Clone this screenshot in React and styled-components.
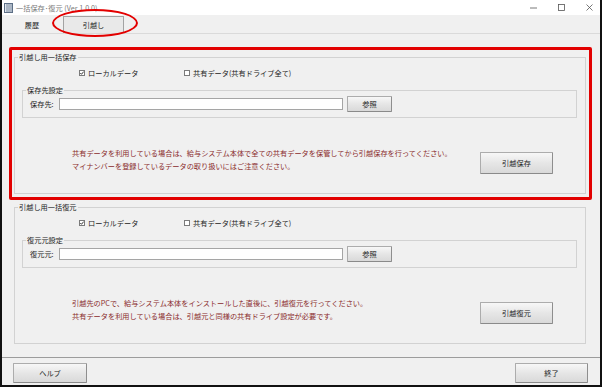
import React from 'react';
import styled, { createGlobalStyle } from 'styled-components';

const GlobalStyle = createGlobalStyle`
  html, body {
    margin: 0;
    padding: 0;
    background: #ffffff;
  }
  body {
    font-family: "Noto Sans CJK JP", "Noto Sans", sans-serif;
  }
`;

const Window = styled.div`
  position: relative;
  width: 602px;
  height: 387px;
  box-sizing: border-box;
  border: 2px solid #111;
  border-top: none;
  background: #f0f0f0;
  font-size: 7.2px;
  color: #222;
  overflow: hidden;
`;

const Header = styled.div`
  position: relative;
`;

const TitleBar = styled.div`
  height: 15px;
  background: #fff;
  display: flex;
  align-items: center;
  padding-left: 2px;
`;

const Title = styled.span`
  margin-left: 3px;
  color: #7a7a7a;
  font-size: 7.2px;
  line-height: 10px;
  flex: 1;
`;

const Controls = styled.div`
  display: flex;
  align-items: center;
  gap: 6px;
`;

const ControlBox = styled.div`
  width: 22px;
  height: 15px;
  display: flex;
  align-items: center;
  justify-content: center;
`;

const TabBar = styled.div`
  height: 18px;
  display: flex;
  align-items: flex-end;
  padding-left: 10px;
  border-bottom: 1px solid #dadada;
`;

const Tab = styled.div`
  box-sizing: border-box;
  display: flex;
  align-items: center;
  justify-content: center;
  line-height: 10px;
  width: ${(p) => (p.$active ? '61px' : '40px')};
  height: ${(p) => (p.$active ? '17px' : '18px')};
  margin-left: ${(p) => (p.$active ? '11px' : '0')};
  padding-top: ${(p) => (p.$active ? '0' : '2px')};
  background: ${(p) => (p.$active ? '#e9e9e9' : 'transparent')};
  border: ${(p) => (p.$active ? '1px solid #a3a3a3' : 'none')};
  border-bottom: none;
`;

const Ellipse = styled.div`
  position: absolute;
  left: 50px;
  top: 9px;
  width: 86px;
  height: 28px;
  box-sizing: border-box;
  border: 2.5px solid #e30000;
  border-radius: 50%;
  pointer-events: none;
`;

const Main = styled.div`
  padding-top: 13px;
`;

const RedFrame = styled.div`
  margin-left: 7px;
  width: 583px;
  box-sizing: border-box;
  border: 3px solid #e20000;
  border-radius: 2px;
  padding: 2px 3px 3px 2px;
`;

const Group = styled.fieldset`
  margin: ${(p) => p.$margin || '0'};
  width: 572px;
  height: 142px;
  box-sizing: border-box;
  border: 1px solid #d2d2d2;
  padding: 0;
  min-width: 0;
`;

const InnerGroup = styled.fieldset`
  margin: 7px 8px 0 7px;
  height: 33px;
  box-sizing: border-box;
  border: 1px solid #d2d2d2;
  padding: 0;
  min-width: 0;
`;

const Legend = styled.legend`
  margin-left: 3px;
  padding: 0 1px;
  font-size: 7.2px;
  line-height: 10px;
  color: #222;
`;

const CheckRow = styled.div`
  display: flex;
  align-items: center;
  height: 10px;
  margin-top: 6px;
  padding-left: 64px;
`;

const CheckItem = styled.label`
  display: flex;
  align-items: center;
  width: ${(p) => p.$width || 'auto'};
  line-height: 10px;
`;

const Box = styled.span`
  width: 6px;
  height: 6px;
  box-sizing: border-box;
  border: 1px solid #7a7a7a;
  background: #fff;
  margin-right: 3px;
  display: flex;
  align-items: center;
  justify-content: center;
`;

const PathRow = styled.div`
  display: flex;
  align-items: center;
  height: 16px;
  margin-top: 1px;
  padding-left: 7px;
`;

const PathLabel = styled.span`
  width: 29px;
  line-height: 10px;
`;

const PathInput = styled.div`
  width: 284px;
  height: 12px;
  box-sizing: border-box;
  background: #fff;
  border: 1px solid #a5a5a5;
`;

const Button = styled.div`
  box-sizing: border-box;
  width: ${(p) => p.$w}px;
  height: ${(p) => p.$h}px;
  margin-left: ${(p) => p.$ml || 0}px;
  margin-top: ${(p) => p.$mt || 0}px;
  display: flex;
  align-items: center;
  justify-content: center;
  line-height: 10px;
  color: #222;
  background: linear-gradient(#f7f7f7, #e6e6e6 50%, #d9d9d9);
  border: 1px solid #acacac;
  border-right-color: #8e8e8e;
  border-bottom-color: #8a8a8a;
  border-radius: 1px;
`;

const InfoRow = styled.div`
  display: flex;
  justify-content: space-between;
  align-items: flex-start;
  margin-top: 29px;
  padding: 0 32px 0 57px;
`;

const Notice = styled.div`
  color: #8a2b2b;
  line-height: 12.5px;
  white-space: nowrap;
`;

const Footer = styled.div`
  margin-top: 13px;
  height: 28px;
  box-sizing: border-box;
  border-top: 1px solid #9c9c9c;
  display: flex;
  justify-content: space-between;
  align-items: flex-start;
  padding: 5px 12px 0 11px;
`;

const Check = () => (
  <svg width="4" height="4" viewBox="0 0 4 4">
    <path d="M0.3 2 L1.5 3.3 L3.7 0.6" fill="none" stroke="#222" strokeWidth="0.9" />
  </svg>
);

const Section = ({ title, setting, pathLabel, lines, action, margin }) => (
  <Group $margin={margin}>
    <Legend>{title}</Legend>
    <CheckRow>
      <CheckItem $width="105px">
        <Box><Check /></Box>ローカルデータ
      </CheckItem>
      <CheckItem>
        <Box />共有データ(共有ドライブ全て)
      </CheckItem>
    </CheckRow>
    <InnerGroup>
      <Legend>{setting}</Legend>
      <PathRow>
        <PathLabel>{pathLabel}</PathLabel>
        <PathInput />
        <Button $w={45} $h={16} $ml={4}>参照</Button>
      </PathRow>
    </InnerGroup>
    <InfoRow>
      <Notice>
        {lines.map((l) => (
          <div key={l}>{l}</div>
        ))}
      </Notice>
      <Button $w={73} $h={22} $mt={5}>{action}</Button>
    </InfoRow>
  </Group>
);

export default function App() {
  return (
    <>
      <GlobalStyle />
      <Window>
        <Header>
          <TitleBar>
            <svg width="9" height="10" viewBox="0 0 9 10">
              <rect x="0.5" y="0.5" width="8" height="9" fill="#dfe6ee" stroke="#5d6f86" />
              <path d="M3 1v8M5 1v8M7 1v8" stroke="#5d6f86" strokeWidth="0.8" />
            </svg>
            <Title>一括保存･復元 (Ver 1.0.0)</Title>
            <Controls>
              <ControlBox>
                <svg width="7" height="7" viewBox="0 0 7 7">
                  <path d="M0 4h7" stroke="#555" strokeWidth="0.8" />
                </svg>
              </ControlBox>
              <ControlBox>
                <svg width="7" height="7" viewBox="0 0 7 7">
                  <rect x="0.5" y="0.5" width="6" height="6" fill="none" stroke="#555" strokeWidth="0.8" />
                </svg>
              </ControlBox>
              <ControlBox>
                <svg width="7" height="7" viewBox="0 0 7 7">
                  <path d="M0.5 0.5l6 6M6.5 0.5l-6 6" stroke="#555" strokeWidth="0.8" />
                </svg>
              </ControlBox>
            </Controls>
          </TitleBar>
          <TabBar>
            <Tab>履歴</Tab>
            <Tab $active>引越し</Tab>
          </TabBar>
          <Ellipse />
        </Header>
        <Main>
          <RedFrame>
            <Section
              title="引越し用一括保存"
              setting="保存先設定"
              pathLabel="保存先:"
              lines={[
                '共有データを利用している場合は、給与システム本体で全ての共有データを保管してから引越保存を行ってください。',
                'マイナンバーを登録しているデータの取り扱いにはご注意ください。',
              ]}
              action="引越保存"
            />
          </RedFrame>
          <Section
            margin="2px 0 0 12px"
            title="引越し用一括復元"
            setting="復元元設定"
            pathLabel="復元元:"
            lines={[
              '引越先のPCで、給与システム本体をインストールした直後に、引越復元を行ってください。',
              '共有データを利用している場合は、引越元と同様の共有ドライブ設定が必要です。',
            ]}
            action="引越復元"
          />
        </Main>
        <Footer>
          <Button $w={74} $h={20}>ヘルプ</Button>
          <Button $w={73} $h={20}>終了</Button>
        </Footer>
      </Window>
    </>
  );
}
